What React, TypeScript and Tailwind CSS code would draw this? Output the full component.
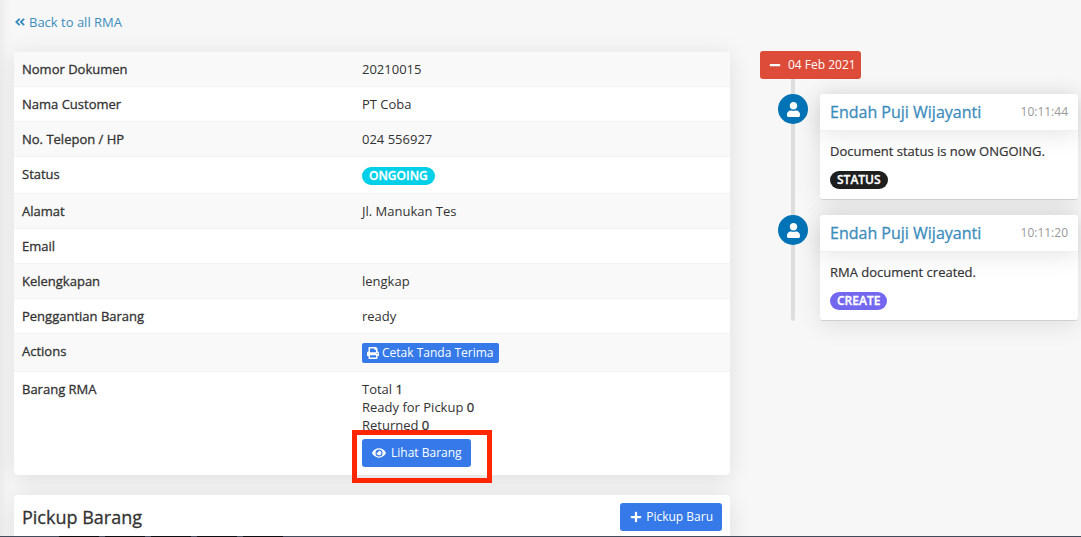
import type { ReactNode } from 'react';
import { FaAngleDoubleLeft, FaEye, FaMinus, FaPlus, FaPrint, FaUser } from 'react-icons/fa';

const cardShadow = 'shadow-[0_4px_25px_rgba(0,0,0,0.1)]';
const strong = 'font-medium [-webkit-text-stroke:0.3px_currentColor]';

function Badge({ className, children }: { className: string; children: ReactNode }) {
  return (
    <span
      className={`inline-block rounded-full px-[7px] text-[12px] leading-[18px] font-semibold text-white [-webkit-text-stroke:0.3px_currentColor] ${className}`}
    >
      {children}
    </span>
  );
}

type Row = { label: string; value: ReactNode };

const rows: Row[] = [
  { label: 'Nomor Dokumen', value: '20210015' },
  { label: 'Nama Customer', value: 'PT Coba' },
  { label: 'No. Telepon / HP', value: '024 556927' },
  {
    label: 'Status',
    value: (
      <div className="flex pt-[2px]">
        <Badge className="bg-[#00cfe8]">ONGOING</Badge>
      </div>
    ),
  },
  { label: 'Alamat', value: 'Jl. Manukan Tes' },
  { label: 'Email', value: '' },
  { label: 'Kelengkapan', value: 'lengkap' },
  { label: 'Penggantian Barang', value: 'ready' },
  {
    label: 'Actions',
    value: (
      <button
        type="button"
        className="mt-px flex h-5 items-center gap-[3px] rounded-[2px] bg-[#357ae8] px-[5px] text-[12px] text-white"
      >
        <FaPrint size={12} />
        Cetak Tanda Terima
      </button>
    ),
  },
  {
    label: 'Barang RMA',
    value: (
      <>
        <p>
          Total <b className={strong}>1</b>
        </p>
        <p>
          Ready for Pickup <b className={strong}>0</b>
        </p>
        <p>
          Returned <b className={strong}>0</b>
        </p>
        <div className="relative mt-[5px] w-fit">
          <button
            type="button"
            className="flex h-7 items-center gap-[5px] rounded-[3px] bg-[#357ae8] pr-[9px] pl-[10px] text-[12px] text-white"
          >
            <FaEye size={14} />
            Lihat Barang
          </button>
          <div className="pointer-events-none absolute -top-[9px] -right-[21px] -bottom-4 -left-[10px] border-[5px] border-[#ff2600]" />
        </div>
      </>
    ),
  },
];

type Event = { name: string; time: string; text: string; tag: string; tagClass: string };

const events: Event[] = [
  {
    name: 'Endah Puji Wijayanti',
    time: '10:11:44',
    text: 'Document status is now ONGOING.',
    tag: 'STATUS',
    tagClass: 'bg-[#1e1e1e]',
  },
  {
    name: 'Endah Puji Wijayanti',
    time: '10:11:20',
    text: 'RMA document created.',
    tag: 'CREATE',
    tagClass: 'bg-[#7367f0]',
  },
];

function TimelineItem({ event }: { event: Event }) {
  return (
    <li className="relative flex gap-3 pl-[18px]">
      <span className="flex size-[30px] shrink-0 items-center justify-center rounded-full bg-[#0073b7] text-white">
        <FaUser size={15} />
      </span>
      <article className={`min-w-0 flex-1 rounded-[3px] border-b border-[#d0d0d0] bg-white ${cardShadow}`}>
        <header className="flex items-center justify-between border-b border-[#f0f0f0] px-[10px] py-2 shadow-[0_4px_25px_rgba(0,0,0,0.1)]">
          <h3 className={`text-[16px] leading-5 ${strong}`}>
            <a href="#user" className="text-[#3c8dbc]">
              {event.name}
            </a>
          </h3>
          <time className="text-[12px] leading-5 text-[#999]">{event.time}</time>
        </header>
        <div className="px-[10px] pt-[11px] pb-[10px]">
          <p className="leading-[18px] [-webkit-text-stroke:0.2px_currentColor]">{event.text}</p>
          <div className="mt-[11px] flex">
            <Badge className={event.tagClass}>{event.tag}</Badge>
          </div>
        </div>
      </article>
    </li>
  );
}

export default function App() {
  return (
    <div className="relative h-screen overflow-hidden bg-[#f7f7f7] pr-[3px] pl-[14px] font-['Open_Sans',sans-serif] text-[13px] leading-[18px] text-[#333] shadow-[inset_12px_0_10px_-8px_rgba(0,0,0,0.05)]">
      <a href="#rma" className="mt-[13px] flex w-fit items-center gap-[3px] text-[#3c8dbc]">
        <FaAngleDoubleLeft size={12} />
        Back to all RMA
      </a>

      <div className="mt-5 grid grid-cols-[716fr_318fr] gap-x-[30px]">
        <main className="min-w-0">
          <section className={`rounded-[4px] bg-white ${cardShadow}`}>
            <table className="w-full table-fixed border-collapse">
              <tbody>
                {rows.map((row) => (
                  <tr key={row.label} className="border-t border-[#f2f2f2] odd:bg-[#f9f9f9]">
                    <th scope="row" className={`w-[340px] p-2 text-left align-top ${strong}`}>
                      {row.label}
                    </th>
                    <td className="p-2 align-top">{row.value}</td>
                  </tr>
                ))}
              </tbody>
            </table>
          </section>

          <section className={`mt-5 rounded-[4px] bg-white ${cardShadow}`}>
            <header className="flex items-center justify-between p-2">
              <h2 className={`text-[18px] leading-6 ${strong}`}>Pickup Barang</h2>
              <button
                type="button"
                className="flex h-7 items-center gap-1 rounded-[3px] bg-[#357ae8] pr-[9px] pl-[10px] text-[12px] text-white"
              >
                <FaPlus size={12} />
                Pickup Baru
              </button>
            </header>
            <div className="h-20" />
          </section>
        </main>

        <aside className="min-w-0">
          <div className="relative">
            <div className="absolute inset-y-0 left-[31px] w-1 rounded-[2px] bg-[#ddd]" />
            <button
              type="button"
              className="relative flex h-7 items-center gap-[7px] rounded-[3px] bg-[#dd4b39] pr-[5px] pl-[9px] text-[12px] text-white"
            >
              <FaMinus size={12} />
              04 Feb 2021
            </button>
            <ul className="mt-[15px] flex flex-col gap-[15px]">
              {events.map((event) => (
                <TimelineItem key={event.time} event={event} />
              ))}
            </ul>
          </div>
        </aside>
      </div>

      <div className="absolute inset-x-0 bottom-0 flex h-px gap-[6px] bg-[#414b5a] pl-[59px]">
        {[0, 1, 2, 3, 4].map((i) => (
          <span key={i} className="h-px w-10 bg-[#0b0c10]" />
        ))}
      </div>
    </div>
  );
}
